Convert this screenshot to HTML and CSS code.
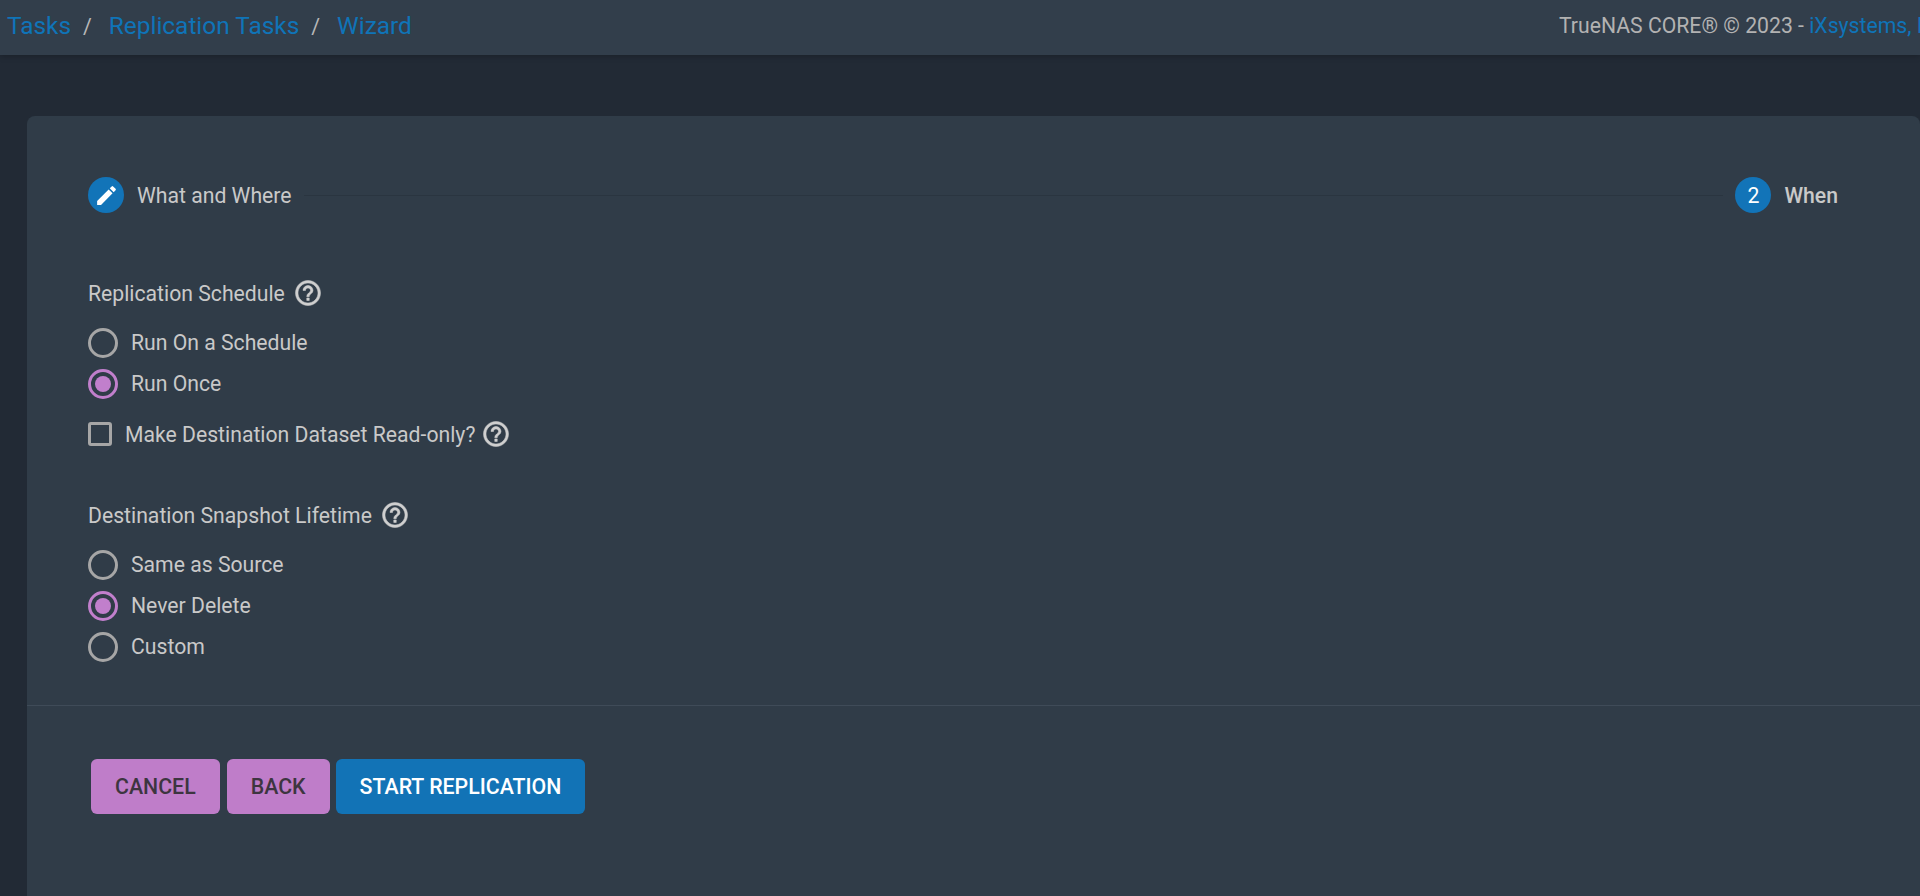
FILE: index.html
```html
<!DOCTYPE html>
<html lang="en">
<head>
    <meta charset="UTF-8">
    <title>Replication Wizard</title>
    <link rel="stylesheet" href="styles.css">
</head>
<body>
    <header class="topbar">
        <nav class="crumbs">
            <a href="#">Tasks</a>
            <span class="crumb-sep">/</span>
            <a href="#">Replication Tasks</a>
            <span class="crumb-sep">/</span>
            <a href="#">Wizard</a>
        </nav>
        <div class="copyright">TrueNAS CORE® © 2023 - <a href="#">iXsystems, Inc.</a></div>
    </header>

    <main class="wizard">
        <div class="stepper">
            <div class="step">
                <span class="step-icon">
                    <svg viewBox="0 0 24 24" width="25" height="25"><path fill="#fff" d="M3 17.25V21h3.75L17.81 9.94l-3.75-3.75L3 17.25zM20.71 7.04a1 1 0 0 0 0-1.41l-2.34-2.34a1 1 0 0 0-1.41 0l-1.83 1.83 3.75 3.75 1.83-1.83z"/></svg>
                </span>
                <span class="step-label">What and Where</span>
            </div>
            <div class="step-line"></div>
            <div class="step">
                <span class="step-icon">2</span>
                <span class="step-label step-current">When</span>
            </div>
        </div>

        <div class="form">
            <div class="field-label">
                Replication Schedule
                <svg class="help" viewBox="0 0 24 24"><path d="M11 18h2v-2h-2v2zm1-16C6.48 2 2 6.48 2 12s4.48 10 10 10 10-4.48 10-10S17.52 2 12 2zm0 18c-4.41 0-8-3.59-8-8s3.59-8 8-8 8 3.59 8 8-3.59 8-8 8zm0-14c-2.21 0-4 1.79-4 4h2c0-1.1.9-2 2-2s2 .9 2 2c0 2-3 1.75-3 5h2c0-2.25 3-2.5 3-5 0-2.21-1.79-4-4-4z"/></svg>
            </div>
            <div class="radio-group">
                <label class="radio"><span class="radio-mark"></span>Run On a Schedule</label>
                <label class="radio checked"><span class="radio-mark"></span>Run Once</label>
            </div>
            <label class="checkbox">
                <span class="checkbox-mark"></span>Make Destination Dataset Read-only?
                <svg class="help" viewBox="0 0 24 24"><path d="M11 18h2v-2h-2v2zm1-16C6.48 2 2 6.48 2 12s4.48 10 10 10 10-4.48 10-10S17.52 2 12 2zm0 18c-4.41 0-8-3.59-8-8s3.59-8 8-8 8 3.59 8 8-3.59 8-8 8zm0-14c-2.21 0-4 1.79-4 4h2c0-1.1.9-2 2-2s2 .9 2 2c0 2-3 1.75-3 5h2c0-2.25 3-2.5 3-5 0-2.21-1.79-4-4-4z"/></svg>
            </label>

            <div class="field-label second">
                Destination Snapshot Lifetime
                <svg class="help" viewBox="0 0 24 24"><path d="M11 18h2v-2h-2v2zm1-16C6.48 2 2 6.48 2 12s4.48 10 10 10 10-4.48 10-10S17.52 2 12 2zm0 18c-4.41 0-8-3.59-8-8s3.59-8 8-8 8 3.59 8 8-3.59 8-8 8zm0-14c-2.21 0-4 1.79-4 4h2c0-1.1.9-2 2-2s2 .9 2 2c0 2-3 1.75-3 5h2c0-2.25 3-2.5 3-5 0-2.21-1.79-4-4-4z"/></svg>
            </div>
            <div class="radio-group">
                <label class="radio"><span class="radio-mark"></span>Same as Source</label>
                <label class="radio checked"><span class="radio-mark"></span>Never Delete</label>
                <label class="radio"><span class="radio-mark"></span>Custom</label>
            </div>
        </div>

        <div class="actions">
            <button class="btn btn-accent">CANCEL</button>
            <button class="btn btn-accent">BACK</button>
            <button class="btn btn-primary">START REPLICATION</button>
        </div>
    </main>
</body>
</html>
```

FILE: styles.css
```css
html, body {
    height: 100%;
}
body {
    margin: 0;
    overflow: hidden;
    display: flex;
    flex-direction: column;
    background-color: #222a35;
    color: #c9c9c9;
    font-family: Roboto, sans-serif;
    font-size: 21.2px;
}
a {
    color: #0f74b8;
    text-decoration: none;
}
.topbar {
    height: 55px;
    flex: none;
    display: flex;
    align-items: center;
    justify-content: space-between;
    padding-left: 7px;
    background-color: #323e4b;
    box-shadow: 0 1px 6px rgba(0,0,0,0.25);
    white-space: nowrap;
}
.crumbs {
    font-size: 24.4px;
    display: flex;
    align-items: center;
    margin-top: -4px;
}
.crumb-sep {
    color: #b8b8b8;
    font-size: 21.33px;
    margin: 2px 17px 0 12px;
}
.copyright {
    color: #b2b2b2;
    width: 361px;
    flex: none;
    overflow: hidden;
    margin-top: -5px;
}
.wizard {
    flex: 1;
    margin: 61px 0 0 27px;
    background-color: #303c48;
    border-radius: 8px 8px 0 0;
}
.stepper {
    display: flex;
    align-items: center;
    height: 36px;
    margin-top: 61px;
    padding: 0 82px 0 61px;
}
.step {
    display: flex;
    align-items: center;
}
.step-icon {
    width: 36px;
    height: 36px;
    border-radius: 50%;
    background-color: #1274b8;
    color: #fff;
    display: flex;
    align-items: center;
    justify-content: center;
    margin-right: 13px;
}
.step-current {
    font-weight: 500;
}
.step-line {
    flex: 1;
    height: 1px;
    margin: 0 12px;
    background-color: #2a3540;
}
.form {
    box-sizing: border-box;
    height: 493px;
    padding: 67px 61px 0;
    border-bottom: 1px solid #3f4b58;
}
.field-label {
    display: flex;
    align-items: center;
    height: 26px;
}
.field-label.second {
    margin-top: 53px;
}
.help {
    width: 30px;
    height: 30px;
    margin-left: 8px;
    fill: #cfcfcf;
    stroke: #cfcfcf;
    stroke-width: 0.4;
    flex: none;
}
.checkbox .help {
    margin-left: 6px;
}
.radio-group {
    margin-top: 16px;
}
.radio {
    display: flex;
    align-items: center;
    height: 41px;
}
.radio-mark {
    width: 30px;
    height: 30px;
    box-sizing: border-box;
    border: 3px solid #a6a6a6;
    border-radius: 50%;
    margin-right: 13px;
    padding: 4px;
    background-clip: content-box;
}
.radio.checked .radio-mark {
    border-color: #c17fcc;
    background-color: #c17fcc;
}
.checkbox {
    display: flex;
    align-items: center;
    margin-top: 15px;
    height: 30px;
}
.checkbox-mark {
    width: 24px;
    height: 24px;
    box-sizing: border-box;
    border: 3.5px solid #a6a6a6;
    border-radius: 3px;
    margin-right: 13px;
}
.actions {
    display: flex;
    gap: 6px;
    margin: 53px 0 0 64px;
}
.btn {
    height: 55px;
    border: none;
    border-radius: 6px;
    font-family: Roboto, sans-serif;
    font-size: 21.33px;
    font-weight: 500;
    padding: 0 24px;
}
.btn-accent + .btn-accent {
    margin-left: 1px;
}
.btn-accent {
    background-color: #bf7dc9;
    color: #3d3540;
}
.btn-primary {
    background-color: #1273b6;
    color: #fff;
}
```
